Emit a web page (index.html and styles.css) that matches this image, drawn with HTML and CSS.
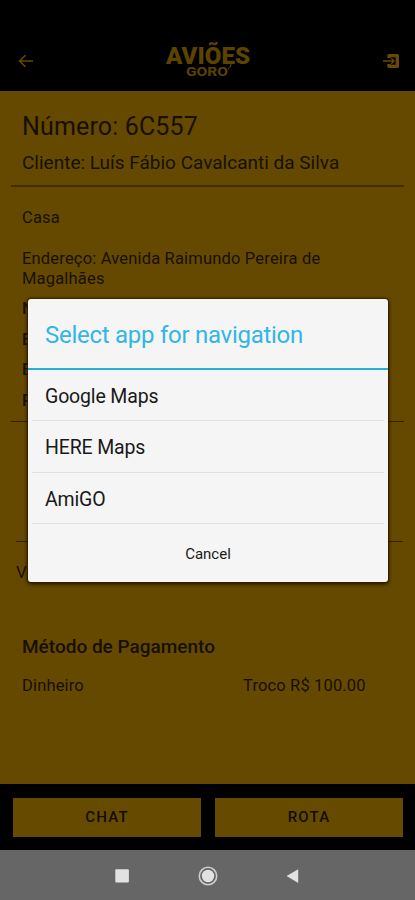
FILE: index.html
```html
<!DOCTYPE html>
<html lang="pt-BR">
<head>
<meta charset="utf-8">
<title>6C557</title>
<link rel="stylesheet" href="styles.css">
</head>
<body>
<div class="screen">
  <header class="topbar">
    <svg class="back" viewBox="0 0 16 14" width="16" height="14"><path d="M15 7H2M7.5 1.2L1.5 7l6 5.8"/></svg>
    <svg class="logo" viewBox="0 0 88 38" width="88" height="38">
      <text class="logo-main" x="2" y="23" textLength="84" lengthAdjust="spacingAndGlyphs">AVIÕES</text>
      <text class="logo-sub" x="22" y="35" textLength="42" lengthAdjust="spacingAndGlyphs">GORO</text>
      <path d="M67 23q0 4-3 5"/>
    </svg>
    <svg class="exit" viewBox="0 0 17 16" width="17" height="16"><path class="door" d="M6 5V2.6h8.3v10.8H6V11"/><path class="arrow" d="M0 8h11M8.2 5.2L11 8l-2.8 2.8"/></svg>
  </header>
  <main class="order">
    <section class="head">
      <h1>Número: 6C557</h1>
      <h2>Cliente: Luís Fábio Cavalcanti da Silva</h2>
    </section>
    <section class="address">
      <p class="place">Casa</p>
      <p class="street">Endereço: Avenida Raimundo Pereira de Magalhães</p>
      <p class="line">N</p>
      <p class="line">B</p>
      <p class="line">E</p>
      <p class="line">P</p>
    </section>
    <section class="items"></section>
    <p class="total">V</p>
    <section class="payment">
      <h3>Método de Pagamento</h3>
      <div class="pay-row"><span class="method">Dinheiro</span><span class="change">Troco R$ 100.00</span></div>
    </section>
  </main>
  <footer class="actions">
    <button>CHAT</button>
    <button>ROTA</button>
  </footer>
  <nav class="sysnav">
    <svg viewBox="0 0 20 20" width="20" height="20"><rect x="3.3" y="3.2" width="13.6" height="13.4" rx="1"/></svg>
    <svg viewBox="0 0 20 20" width="20" height="20"><circle cx="10" cy="10" r="6.2"/><circle class="ring" cx="10" cy="10" r="8.7"/></svg>
    <svg viewBox="0 0 20 20" width="20" height="20"><path d="M3.6 10L15.2 3.2v13.9z"/></svg>
  </nav>
  <div class="dialog">
    <div class="title">Select app for navigation</div>
    <div class="option">Google Maps</div>
    <div class="option">HERE Maps</div>
    <div class="option">AmiGO</div>
    <div class="cancel">Cancel</div>
  </div>
</div>
</body>
</html>
```
FILE: styles.css
```css
* { box-sizing: border-box; margin: 0; padding: 0; }
body { font-family: Roboto, "Liberation Sans", sans-serif; background: #000; }
.screen {
  position: relative; width: 415px; height: 900px; overflow: hidden;
  display: flex; flex-direction: column; color: #171000;
}
.topbar {
  height: 91px; background: #000; padding: 41px 15px 0 18px;
  display: flex; justify-content: space-between; align-items: flex-start;
}
.topbar svg { fill: none; stroke: #664a00; }
.back { margin-top: 13px; stroke-width: 1.5; }
.logo { margin-left: -2px; }
.topbar .logo text { fill: #5c4300; stroke: none; }
.logo-main { font-size: 23px; font-weight: 900; }
.logo-sub { font-size: 13.5px; font-weight: 700; }
.exit { margin-top: 12px; }
.exit .door { stroke-width: 3.4; stroke-linejoin: round; }
.exit .arrow { stroke-width: 1.4; }
.order { height: 693px; background: #654900; }
.head { height: 96px; margin: 0 11px; padding: 21px 11px 0; border-bottom: 2px solid #402d00; }
h1 { font-size: 25px; font-weight: 400; line-height: 30px; letter-spacing: .15px; }
h2 { font-size: 19px; font-weight: 400; line-height: 24px; margin-top: 9px; white-space: nowrap; }
.address { height: 235px; margin: 0 11px; padding: 21px 11px 0; border-bottom: 1px solid #302200; }
.address p { font-size: 16.5px; line-height: 20px; letter-spacing: .18px; }
.address .street { margin: 21px 0 10px; width: 320px; }
.address .line { font-weight: 500; margin-bottom: 10.5px; }
.items { height: 120px; margin: 0 12px 0 16px; border-bottom: 1px solid #302200; }
.total { font-size: 17px; line-height: 20px; margin: 20px 0 0 16px; }
.payment { padding: 54px 22px 0; }
h3 { font-size: 19px; font-weight: 500; line-height: 22px; }
.pay-row { display: flex; font-size: 16.5px; line-height: 20px; margin-top: 18px; letter-spacing: .15px; }
.method { width: 221px; }
.actions { height: 66px; background: #000; padding: 14px 12px 13px 13px; display: flex; gap: 14px; }
.actions button {
  flex: 1; border: 0; background: #664a00; color: #110c00;
  font: 500 15px Roboto, sans-serif; letter-spacing: 1.2px; padding-bottom: 2px;
}
.sysnav {
  height: 50px; background: #666; display: flex; gap: 65.5px;
  padding: 15.5px 0 0 112px;
}
.sysnav svg { fill: #e2e2e2; }
.sysnav .ring { fill: none; stroke: #cfcfcf; stroke-width: 1.6; }
.dialog {
  position: absolute; left: 28px; top: 299px; width: 360px; height: 283px;
  background: #f5f5f5; border-radius: 3px; color: #191919;
  box-shadow: 0 0 2px 1px #391b00, 0 2px 4px #1c1000;
}
.title { height: 71px; padding: 21px 17px 0; border-bottom: 2px solid #21b3d6; color: #33b5e5; font-size: 24px; line-height: 30px; letter-spacing: -.27px; }
.option { height: 51.3px; margin: 0 4px; padding: 0 13px; border-bottom: 1px solid #e1e1e1; font-size: 19.5px; line-height: 54px; letter-spacing: -.15px; }
.cancel { padding-top: 20px; text-align: center; font-size: 15px; line-height: 20px; }
```
